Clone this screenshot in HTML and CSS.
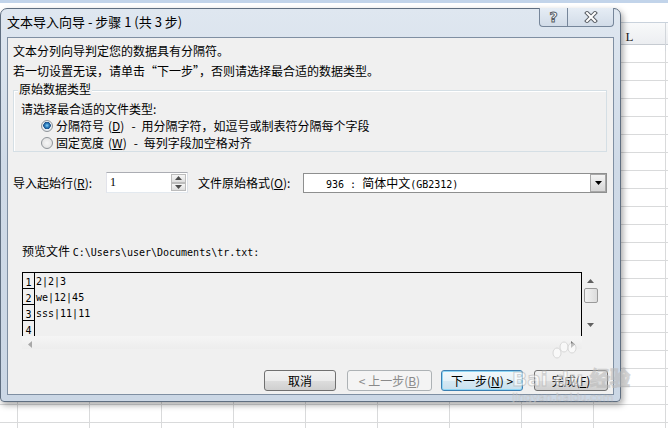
FILE: index.html
```html
<!DOCTYPE html>
<html lang="zh-CN">
<head>
    <meta charset="UTF-8">
    <meta name="viewport" content="width=device-width, initial-scale=1.0">
    <title>文本导入向导 - 步骤 1 (共 3 步)</title>
    <link rel="stylesheet" href="styles.css">
</head>
<body>
    <!-- Excel sheet behind the dialog -->
    <div class="sheet">
        <div class="ribbon-edge"></div>
        <div class="formula-bar"></div>
        <div class="col-headers">
            <span class="col-head corner"></span>
            <span class="col-head">D</span>
            <span class="col-head">E</span>
            <span class="col-head">F</span>
            <span class="col-head">G</span>
            <span class="col-head">H</span>
            <span class="col-head">I</span>
            <span class="col-head">J</span>
            <span class="col-head">K</span>
            <span class="col-head">L</span>
        </div>
        <div class="cells"></div>
    </div>

    <div class="dialog">
        <div class="titlebar">
            <span class="title">文本导入向导 - 步骤 1 (共 3 步)</span>
            <div class="caption-buttons">
                <span class="cap-btn help">?</span>
                <span class="cap-btn close">
                    <svg width="16" height="12" viewBox="0 0 16 12">
                        <path d="M4 2 L12 10 M12 2 L4 10" stroke="#5a5f66" stroke-width="4" stroke-linecap="square" fill="none"/>
                        <path d="M4 2 L12 10 M12 2 L4 10" stroke="#ffffff" stroke-width="2" stroke-linecap="square" fill="none"/>
                    </svg>
                </span>
            </div>
        </div>

        <div class="client">
            <div class="intro">
                <p>文本分列向导判定您的数据具有分隔符。</p>
                <p>若一切设置无误，请单击“下一步”，否则请选择最合适的数据类型。</p>
            </div>

            <div class="group">
                <div class="group-title">原始数据类型</div>
                <div class="group-hint">请选择最合适的文件类型:</div>
                <div class="radio-row">
                    <span class="radio checked"></span>
                    <span>分隔符号<span class="acc">(<u>D</u>)</span><span class="dash">-</span>用分隔字符，如逗号或制表符分隔每个字段</span>
                </div>
                <div class="radio-row">
                    <span class="radio"></span>
                    <span>固定宽度<span class="acc">(<u>W</u>)</span><span class="dash">-</span>每列字段加空格对齐</span>
                </div>
            </div>

            <div class="import-row">
                <span class="field-label start-label">导入起始行(<u>R</u>):</span>
                <div class="spin-input">
                    <span class="spin-value">1</span>
                    <span class="spin">
                        <span class="spin-half">
                            <svg width="7" height="4" viewBox="0 0 7 4"><path d="M0 4 L3.5 0 L7 4 Z" fill="#4d4d4d"/></svg>
                        </span>
                        <span class="spin-half">
                            <svg width="7" height="4" viewBox="0 0 7 4"><path d="M0 0 L3.5 4 L7 0 Z" fill="#4d4d4d"/></svg>
                        </span>
                    </span>
                </div>
                <span class="field-label origin-label">文件原始格式(<u>O</u>):</span>
                <div class="combo">
                    <span class="combo-value"><span class="mono">936 : </span>简体中文<span class="mono">(GB2312)</span></span>
                    <span class="combo-btn">
                        <svg width="7" height="4" viewBox="0 0 7 4"><path d="M0 0 L3.5 4 L7 0 Z" fill="#000"/></svg>
                    </span>
                </div>
            </div>

            <div class="preview-label">预览文件 <span class="mono">C:\Users\user\Documents\tr.txt:</span></div>

            <div class="preview">
                <div class="preview-main">
                    <div class="preview-box">
                        <div class="prev-row"><span class="num">1</span><span class="data">2|2|3</span></div>
                        <div class="prev-row"><span class="num">2</span><span class="data">we|12|45</span></div>
                        <div class="prev-row"><span class="num">3</span><span class="data">sss|11|11</span></div>
                        <div class="prev-row"><span class="num">4</span><span class="data"></span></div>
                    </div>
                    <div class="hscroll">
                        <svg width="4" height="7" viewBox="0 0 4 7"><path d="M4 0 L0 3.5 L4 7 Z" fill="#a8a8a8"/></svg>
                        <svg width="4" height="7" viewBox="0 0 4 7"><path d="M0 0 L4 3.5 L0 7 Z" fill="#606060"/></svg>
                    </div>
                </div>
                <div class="vscroll">
                    <svg width="7" height="4" viewBox="0 0 7 4"><path d="M0 4 L3.5 0 L7 4 Z" fill="#606060"/></svg>
                    <span class="thumb"></span>
                    <svg class="down" width="7" height="4" viewBox="0 0 7 4"><path d="M0 0 L3.5 4 L7 0 Z" fill="#606060"/></svg>
                </div>
            </div>

            <div class="button-row">
                <span class="btn cancel">取消</span>
                <span class="btn back disabled">&lt; 上一步(<u>B</u>)</span>
                <span class="btn next default">下一步(<u>N</u>) &gt;</span>
                <span class="btn finish">完成(<u>F</u>)</span>
            </div>
        </div>
    </div>

    <!-- site watermark over the screenshot -->
    <div class="watermark">
        <svg class="paw" width="30" height="20" viewBox="0 0 30 20">
            <ellipse cx="7" cy="13" rx="4" ry="5" fill="#fff" stroke="#c8c8c8"/>
            <ellipse cx="14" cy="7" rx="4" ry="5" fill="#fff" stroke="#c8c8c8"/>
            <ellipse cx="22" cy="8" rx="4" ry="5" fill="#fff" stroke="#c8c8c8"/>
        </svg>
        <div class="wm-main">Bai du 经验</div>
        <div class="wm-site">jingyan.baidu.com</div>
    </div>
</body>
</html>
```

FILE: styles.css
```css
* {
    box-sizing: border-box;
}

body {
    margin: 0;
    width: 668px;
    height: 428px;
    overflow: hidden;
    position: relative;
    background: #fff;
    font-family: "Noto Sans CJK SC", "Noto Sans", sans-serif;
    font-size: 12px;
    color: #000;
}

u {
    text-decoration: underline;
    text-underline-offset: 1px;
}

.mono {
    font-family: "DejaVu Sans Mono", "Liberation Mono", monospace;
    font-size: 10px;
}

/* ---------- sheet ---------- */

.sheet {
    height: 428px;
}

.ribbon-edge {
    height: 3px;
    background: #c2d4ea;
}

.formula-bar {
    height: 20px;
    background: #fff;
    border-bottom: 1px solid #c9d2dc;
}

.col-headers {
    display: grid;
    grid-template-columns: 18px repeat(9, 72px);
    height: 22px;
    background: linear-gradient(#f8f9fa, #eceef1);
    border-bottom: 1px solid #c6cbd1;
}

.col-head {
    border-right: 1px solid #d2d6db;
    text-align: center;
    font-family: "Liberation Serif", serif;
    font-size: 13px;
    line-height: 28px;
    color: #222;
}

.cells {
    height: 383px;
    background-image:
        linear-gradient(to right, transparent 71px, #d9dadb 71px),
        linear-gradient(to bottom, transparent 17px, #d9dadb 17px);
    background-size: 72px 18px, 72px 18px;
    background-position: 18px 0, 0 0;
}

/* ---------- dialog frame ---------- */

.dialog {
    position: absolute;
    left: 0;
    top: 8px;
    width: 621px;
    height: 394px;
    padding: 0 6px 6px;
    border: 1px solid #5f6e80;
    border-radius: 7px 7px 4px 4px;
    background: linear-gradient(#dfe7f0, #cfdae7 40%, #cbd7e5);
    box-shadow: 2px 3px 6px rgba(0, 0, 0, 0.35);
}

.titlebar {
    display: flex;
    align-items: flex-start;
    height: 28px;
}

.title {
    font-size: 13px;
    line-height: 20px;
    margin-top: 3px;
}

.caption-buttons {
    display: flex;
    margin-left: auto;
    margin-top: -1px;
}

.cap-btn {
    display: flex;
    align-items: center;
    justify-content: center;
    height: 19px;
    border: 1px solid #76869a;
    border-top: none;
    background: linear-gradient(#e6edf5, #d2dce8);
}

.help {
    width: 28px;
    border-right: none;
    border-radius: 0 0 0 4px;
    font-family: "DejaVu Sans", sans-serif;
    font-weight: bold;
    font-size: 14px;
    color: #fff;
    -webkit-text-stroke: 1px #5a5f66;
}

.close {
    width: 47px;
    border-radius: 0 0 4px 0;
}

.client {
    height: 358px;
    border: 1px solid #7f8fa2;
    background: #f0f0f0;
}

/* ---------- intro ---------- */

.intro {
    padding: 3px 0 0 5px;
}

.intro p {
    margin: 0;
    line-height: 20px;
}

/* ---------- group box ---------- */

.group {
    height: 62px;
    margin: 9px 6px 0 5px;
    border: 1px solid #d5dfe5;
    box-shadow: inset 1px 1px 0 #fff;
}

.group-title {
    width: max-content;
    margin: -10px 0 0 4px;
    padding: 0 1px;
    line-height: 16px;
    background: #f0f0f0;
}

.group-hint {
    margin-top: 3px;
    padding-left: 7px;
    line-height: 17px;
}

.radio-row {
    display: flex;
    align-items: center;
    gap: 3px;
    height: 17px;
    padding-left: 27px;
    white-space: nowrap;
}

.acc {
    margin-left: 4px;
}

.dash {
    margin: 0 6px 0 7px;
}

.radio {
    width: 12px;
    height: 12px;
    border-radius: 50%;
    border: 1px solid #8f9499;
    background: radial-gradient(circle at 50% 50%, #f6f6f6 0, #dcdcdc 100%);
}

.radio.checked {
    background: radial-gradient(circle at 50% 45%, #8ad0f5 0, #2c7fc0 2px, #1c4f86 3.5px, #e9eef3 4px, #d8dde2 100%);
}

/* ---------- import row ---------- */

.import-row {
    display: flex;
    align-items: center;
    height: 21px;
    margin-top: 20px;
    padding-left: 5px;
}

.field-label {
    white-space: nowrap;
}

.start-label {
    width: 93px;
}

.origin-label {
    width: 105px;
    margin-left: 10px;
}

.spin-input {
    display: flex;
    width: 82px;
    height: 21px;
    border: 1px solid #abadb3;
    border-color: #abadb3 #dbdfe6 #e3e9ef #e2e3ea;
    background: #fff;
}

.spin-value {
    flex: 1;
    padding-left: 3px;
    font-family: "Liberation Serif", serif;
    font-size: 12px;
    line-height: 19px;
}

.spin {
    display: flex;
    flex-direction: column;
    width: 16px;
    padding: 1px 1px 1px 0;
}

.spin-half {
    flex: 1;
    display: flex;
    align-items: center;
    justify-content: center;
    border: 1px solid #bcbcbc;
    background: linear-gradient(#f6f6f6, #dedede);
}

.combo {
    display: flex;
    width: 304px;
    height: 20px;
    border: 1px solid #8e8f8f;
    background: #fff;
}

.combo-value {
    flex: 1;
    padding-left: 22px;
    line-height: 18px;
    white-space: pre;
}

.combo-btn {
    display: flex;
    align-items: center;
    justify-content: center;
    width: 16px;
    border: 1px solid #a7a7a7;
    background: linear-gradient(#f4f4f4, #d6d6d6);
}

/* ---------- preview ---------- */

.preview-label {
    margin-top: 50px;
    padding-left: 14px;
    line-height: 16px;
    white-space: pre;
}

.preview {
    display: flex;
    margin: 11px 0 0 14px;
}

.preview-main {
    width: 560px;
}

.preview-box {
    height: 64px;
    overflow: hidden;
    border: 1px solid #000;
    border-bottom: none;
}

.prev-row {
    display: flex;
    height: 16px;
}

.num {
    width: 12px;
    border-right: 1px solid #000;
    border-bottom: 1px solid #000;
    text-align: center;
    font-family: "DejaVu Sans Mono", monospace;
    font-size: 10px;
    line-height: 19px;
}

.data {
    padding-left: 1px;
    font-family: "DejaVu Sans Mono", monospace;
    font-size: 10px;
    line-height: 17px;
    white-space: pre;
}

.hscroll {
    display: flex;
    align-items: center;
    justify-content: space-between;
    height: 13px;
    padding: 3px 7px 0 6px;
    background: linear-gradient(#f5f5f5, #ededed);
}

.vscroll {
    display: flex;
    flex-direction: column;
    align-items: center;
    width: 15px;
    height: 64px;
    margin-left: 1px;
    padding-top: 7px;
}

.thumb {
    width: 14px;
    height: 15px;
    margin-top: 5px;
    border: 1px solid #9a9a9a;
    border-radius: 2px;
    background: linear-gradient(to right, #f3f3f3, #dcdcdc);
}

.vscroll .down {
    margin-top: 20px;
}

/* ---------- buttons ---------- */

.button-row {
    display: flex;
    justify-content: flex-end;
    gap: 11px;
    margin-top: 21px;
    padding-right: 5px;
}

.btn {
    height: 21px;
    border: 1px solid #707070;
    border-radius: 3px;
    background: linear-gradient(#f2f2f2 0%, #ebebeb 50%, #dddddd 51%, #cfcfcf 100%);
    text-align: center;
    line-height: 19px;
    white-space: nowrap;
}

.cancel {
    width: 72px;
}

.back {
    width: 85px;
}

.next {
    width: 82px;
    margin-left: -2px;
}

.finish {
    width: 74px;
}

.btn.disabled {
    border-color: #adb2b5;
    background: #f4f4f4;
    color: #8a8a8a;
}

.btn.default {
    border-color: #3c7fb1;
    box-shadow: inset 0 0 0 1px #8fd6f5;
    background: linear-gradient(#f2f8fb 0%, #e6f2f8 50%, #d6e9f3 51%, #c8e0ee 100%);
}

/* ---------- watermark ---------- */

.watermark {
    position: absolute;
    left: 512px;
    top: 340px;
    width: 118px;
    opacity: 0.6;
    pointer-events: none;
}

.paw {
    display: block;
    margin-left: 38px;
}

.wm-main {
    margin-top: 8px;
    font-family: "DejaVu Sans", sans-serif;
    font-size: 20px;
    font-weight: bold;
    line-height: 22px;
    color: #fff;
    -webkit-text-stroke: 1px #b9b9b9;
    white-space: nowrap;
}

.wm-site {
    margin-top: 2px;
    font-family: "DejaVu Sans", sans-serif;
    font-size: 11px;
    line-height: 12px;
    color: #fff;
    -webkit-text-stroke: 0.6px #b9b9b9;
    white-space: nowrap;
}
```
